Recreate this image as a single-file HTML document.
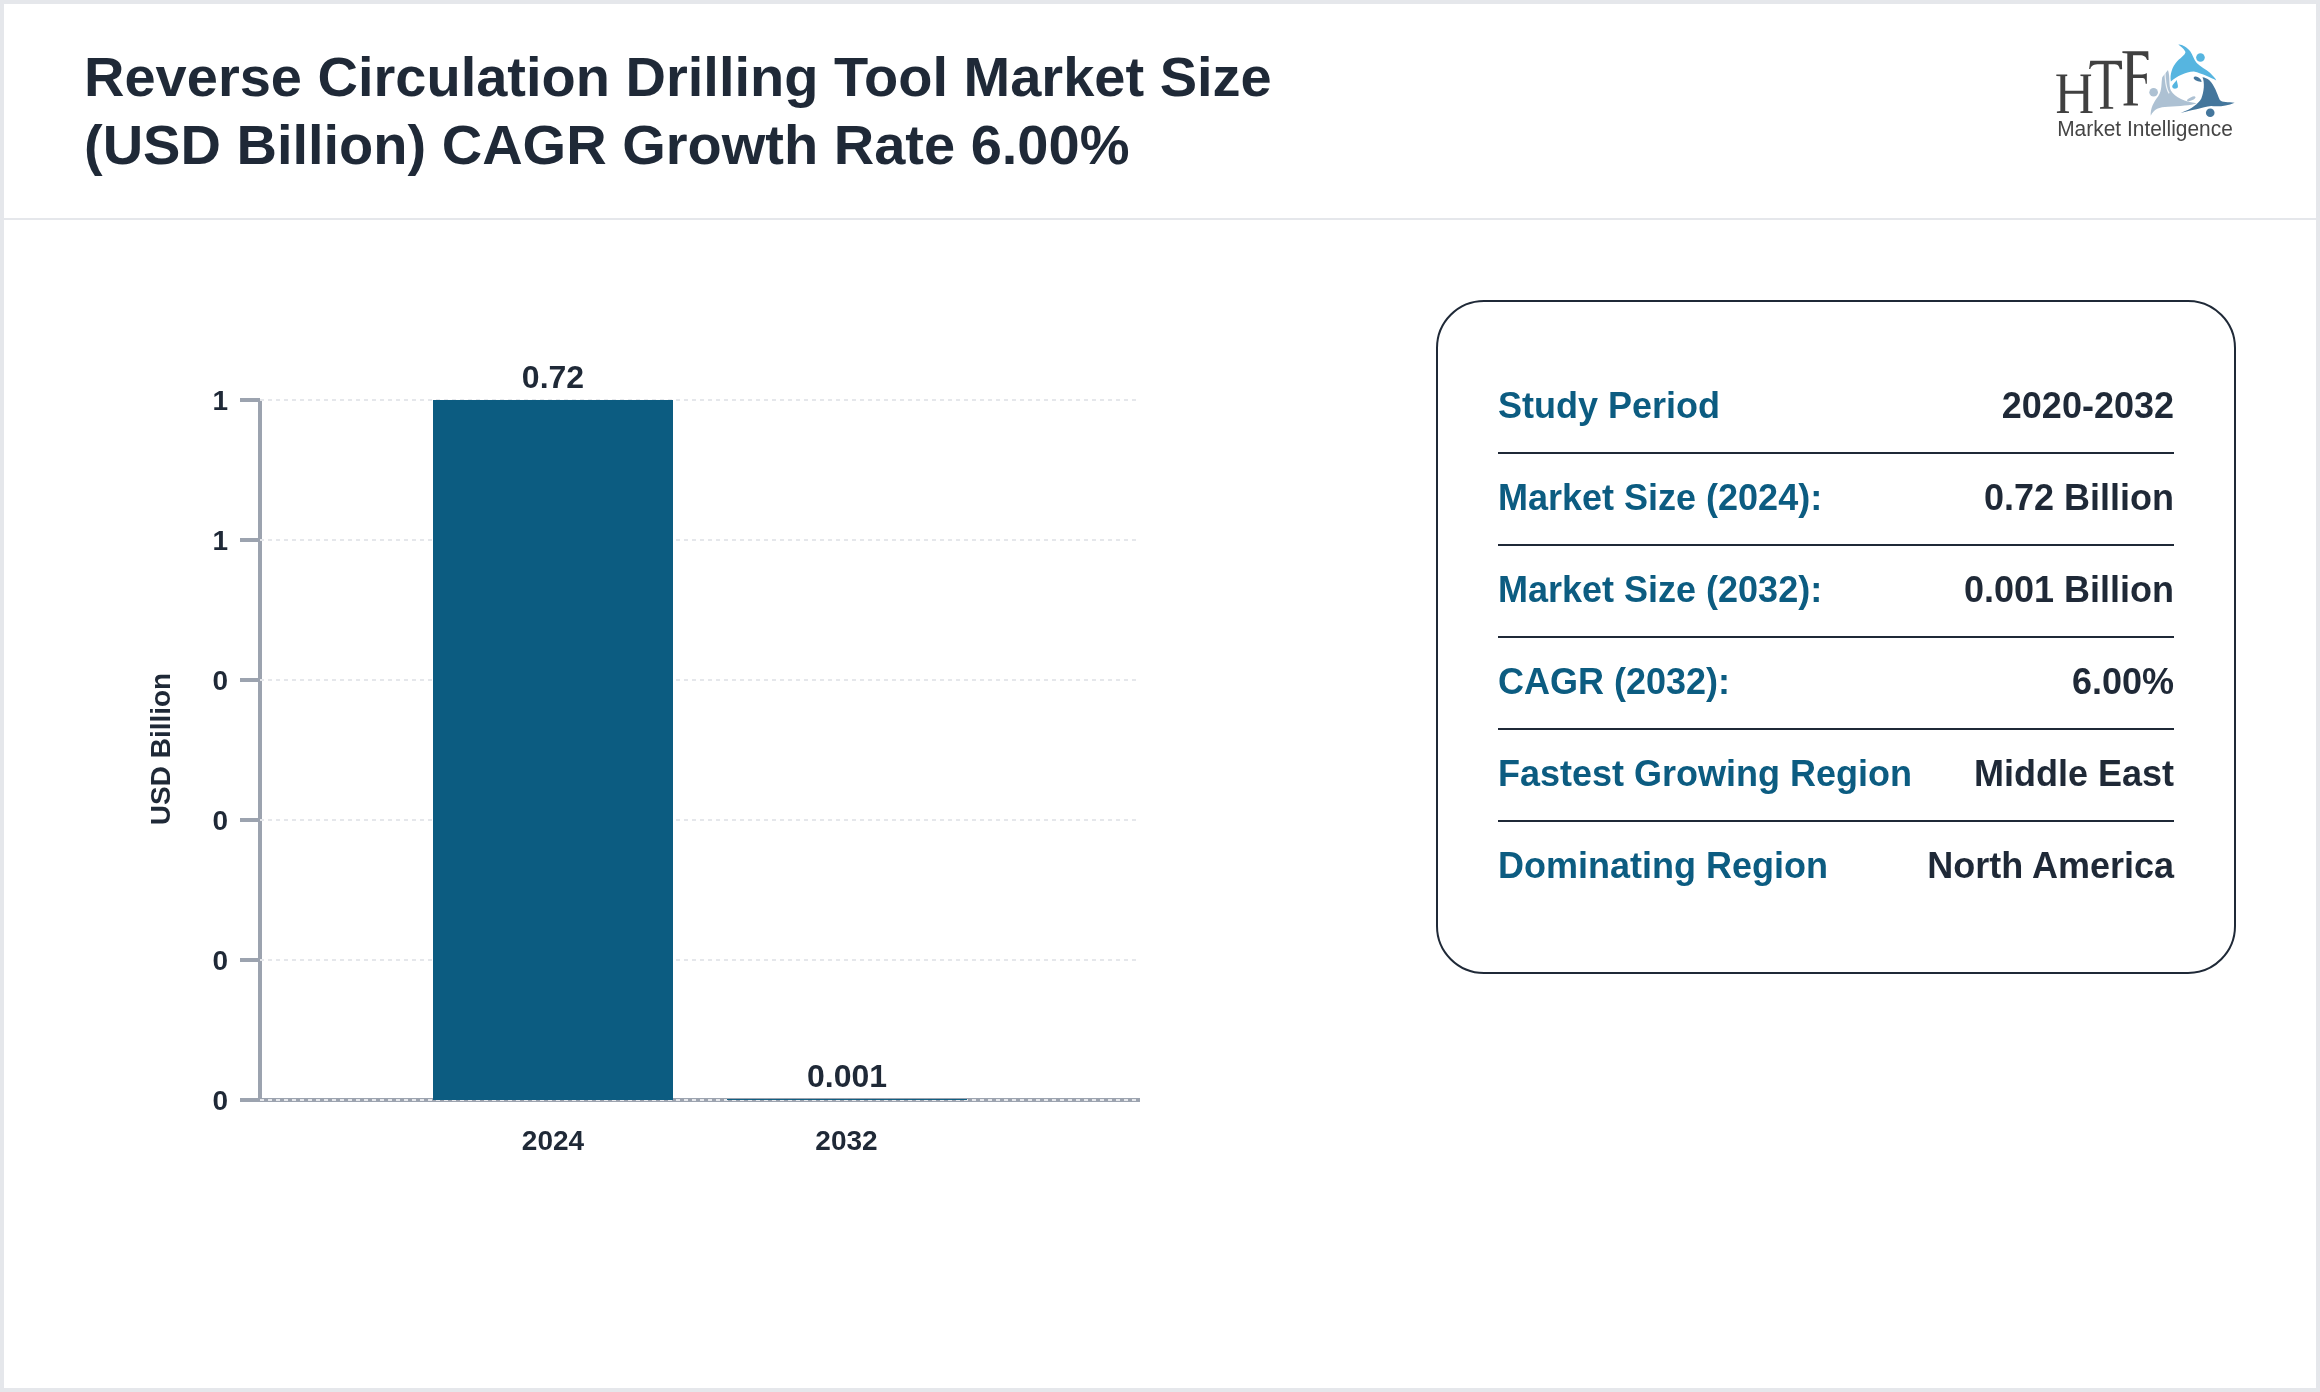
<!DOCTYPE html>
<html>
<head>
<meta charset="utf-8">
<style>
html,body{margin:0;padding:0;}
body{width:2320px;height:1392px;overflow:hidden;background:#e5e7eb;font-family:"Liberation Sans",sans-serif;}
#frame{will-change:transform;position:absolute;left:4px;top:4px;width:2312px;height:1384px;background:#fff;}
#header{position:absolute;left:0;top:0;width:2312px;height:214px;border-bottom:2px solid #e5e7eb;}
#title{position:absolute;left:80px;top:39px;margin:0;font-weight:bold;font-size:56px;line-height:68px;color:#1f2937;white-space:nowrap;}
#swirl{position:absolute;left:2141px;top:36px;width:95px;height:80px;}
#htf{position:absolute;left:2046px;top:36px;width:110px;height:80px;}
#logo{position:absolute;left:2036px;top:32px;width:210px;height:114px;}
#chart{will-change:transform;position:absolute;left:0;top:0;width:2320px;height:1392px;}
#card{will-change:transform;position:absolute;left:1436px;top:300px;width:796px;height:670px;border:2px solid #1f2937;border-radius:48px;background:#fff;}
.row{position:absolute;left:60px;width:676px;height:92px;}
.row .k{position:absolute;left:0;top:0;font-weight:bold;font-size:36px;line-height:54px;color:#0c5c81;white-space:nowrap;}
.row .v{position:absolute;right:0;top:0;font-weight:bold;font-size:36px;line-height:54px;color:#1f2937;white-space:nowrap;}
.row .ln{position:absolute;left:0;top:90px;width:676px;height:2px;background:#1f2937;}
</style>
</head>
<body>
<div id="frame">
  <div id="header">
    <svg id="logo" width="210" height="114" viewBox="0 0 2320 1259">
  <text x="190" y="1110" font-family="Liberation Sans" font-size="235" fill="#454545" textLength="1940" lengthAdjust="spacingAndGlyphs">Market Intelligence</text>
</svg>
    <svg id="swirl" width="95" height="80" viewBox="0 0 1653 1392">
    <path fill="#56b5e0" d="M580 80 C640 70 730 130 790 200 C830 260 850 340 900 400 C960 460 1060 510 1130 570 C1180 620 1230 670 1240 705 C1150 660 1000 585 850 550 C700 560 560 630 450 720 C430 600 470 470 560 370 C640 290 720 240 700 200 C670 150 620 110 580 80 Z"/>
    <circle cx="965" cy="305" r="75" fill="#56b5e0"/>
    <path fill="#56b5e0" d="M551 694 C560 740 578 790 572 818 C566 855 478 862 474 815 C470 778 520 740 551 694 Z"/>
    <path fill="#44769c" d="M1000 650 C1040 740 1030 900 980 1020 C930 1110 820 1200 620 1270 C800 1230 1000 1175 1150 1150 C1300 1160 1420 1150 1560 1090 C1450 1075 1340 1095 1300 1040 C1250 920 1210 790 1120 700 C1080 670 1040 655 1000 650 Z"/>
    <path fill="#44769c" d="M846 662 C846 618 925 628 962 678 C982 703 990 725 980 732 C940 722 848 705 846 662 Z"/>
    <circle cx="1135" cy="1265" r="75" fill="#44769c"/>
    <path fill="#adc1d3" d="M400 520 C440 640 410 780 450 880 C520 1000 700 1080 900 1100 C800 1140 600 1150 400 1160 C250 1165 150 1200 100 1320 C90 1200 150 1080 230 980 C300 880 280 760 300 650 C330 600 370 560 400 520 Z"/>
    <ellipse cx="805" cy="1025" rx="80" ry="28" transform="rotate(-25 805 1025)" fill="#adc1d3"/>
    <circle cx="150" cy="910" r="75" fill="#adc1d3"/>
    <path d="M345 560 C360 700 350 820 420 930" stroke="#fff" stroke-width="22" fill="none" opacity="0.8"/>
</svg>
    <svg id="htf" width="110" height="80" viewBox="0 0 1914 1392">
    <g fill="#404040">
    <path d="M110 600 L300 600 L300 625 L265 632 L265 885 L580 885 L580 632 L530 625 L530 600 L715 600 L715 625 L665 632 L665 1235 L740 1245 L740 1270 L530 1270 L530 1245 L580 1235 L580 935 L265 935 L265 1235 L330 1245 L330 1270 L120 1270 L120 1245 L180 1235 L180 632 L110 625 Z"/>
    <path d="M700 360 L1250 360 L1255 510 L1215 510 C1200 440 1180 420 1100 420 L1020 420 L1020 1160 L1100 1170 L1100 1195 L870 1195 L870 1170 L935 1160 L935 420 L860 420 C760 420 720 440 700 505 L680 505 Z"/>
    <path d="M1260 195 L1710 195 L1715 350 L1690 350 C1670 290 1640 265 1560 265 L1445 265 L1445 600 L1600 600 C1650 600 1665 590 1670 580 L1685 580 L1685 760 L1665 760 C1660 680 1650 660 1600 660 L1445 660 L1445 1100 L1530 1110 L1530 1140 L1280 1140 L1280 1110 L1345 1100 L1345 235 L1260 225 Z"/>
    </g>
</svg>
    <h1 id="title">Reverse Circulation Drilling Tool Market Size<br>(USD Billion) CAGR Growth Rate 6.00%</h1>
  </div>
</div>

<svg id="chart" width="2320" height="1392" viewBox="0 0 2320 1392">
  <line x1="260" y1="400" x2="260" y2="1100" stroke="#9ca3af" stroke-width="4"/>
  <line x1="260" y1="1100" x2="1140" y2="1100" stroke="#9ca3af" stroke-width="4"/>
  <line x1="240" y1="400" x2="260" y2="400" stroke="#9ca3af" stroke-width="4"/>
  <line x1="240" y1="540" x2="260" y2="540" stroke="#9ca3af" stroke-width="4"/>
  <line x1="240" y1="680" x2="260" y2="680" stroke="#9ca3af" stroke-width="4"/>
  <line x1="240" y1="820" x2="260" y2="820" stroke="#9ca3af" stroke-width="4"/>
  <line x1="240" y1="960" x2="260" y2="960" stroke="#9ca3af" stroke-width="4"/>
  <line x1="240" y1="1100" x2="260" y2="1100" stroke="#9ca3af" stroke-width="4"/>
  <line x1="260" y1="400" x2="1140" y2="400" stroke="#e5e7eb" stroke-width="2" stroke-dasharray="4 4"/>
  <line x1="260" y1="540" x2="1140" y2="540" stroke="#e5e7eb" stroke-width="2" stroke-dasharray="4 4"/>
  <line x1="260" y1="680" x2="1140" y2="680" stroke="#e5e7eb" stroke-width="2" stroke-dasharray="4 4"/>
  <line x1="260" y1="820" x2="1140" y2="820" stroke="#e5e7eb" stroke-width="2" stroke-dasharray="4 4"/>
  <line x1="260" y1="960" x2="1140" y2="960" stroke="#e5e7eb" stroke-width="2" stroke-dasharray="4 4"/>
  <line x1="260" y1="1100" x2="1140" y2="1100" stroke="#e5e7eb" stroke-width="2" stroke-dasharray="4 4"/>
  <rect x="433" y="400" width="240" height="700" fill="#0c5c81"/>
  <rect x="727" y="1099.03" width="240" height="0.97" fill="#0c5c81"/>
  <g fill="#1f2937" font-family="Liberation Sans" font-weight="bold">
  <text x="228" y="400" dy="0.355em" font-size="28" text-anchor="end">1</text>
  <text x="228" y="540" dy="0.355em" font-size="28" text-anchor="end">1</text>
  <text x="228" y="680" dy="0.355em" font-size="28" text-anchor="end">0</text>
  <text x="228" y="820" dy="0.355em" font-size="28" text-anchor="end">0</text>
  <text x="228" y="960" dy="0.355em" font-size="28" text-anchor="end">0</text>
  <text x="228" y="1100" dy="0.355em" font-size="28" text-anchor="end">0</text>
  <text x="553" y="1150" font-size="28" text-anchor="middle">2024</text>
  <text x="846.5" y="1150" font-size="28" text-anchor="middle">2032</text>
  <text x="553" y="388" font-size="32" text-anchor="middle">0.72</text>
  <text x="847" y="1087" font-size="32" text-anchor="middle">0.001</text>
  <text transform="translate(170 749) rotate(-90)" font-size="28" text-anchor="middle">USD Billion</text>
  </g>
</svg>

<div id="card">
  <div class="row" style="top:60px"><div class="k" style="top:17px">Study Period</div><div class="v" style="top:17px">2020-2032</div><div class="ln"></div></div>
  <div class="row" style="top:152px"><div class="k" style="top:17px">Market Size (2024):</div><div class="v" style="top:17px">0.72 Billion</div><div class="ln"></div></div>
  <div class="row" style="top:244px"><div class="k" style="top:17px">Market Size (2032):</div><div class="v" style="top:17px">0.001 Billion</div><div class="ln"></div></div>
  <div class="row" style="top:336px"><div class="k" style="top:17px">CAGR (2032):</div><div class="v" style="top:17px">6.00%</div><div class="ln"></div></div>
  <div class="row" style="top:428px"><div class="k" style="top:17px">Fastest Growing Region</div><div class="v" style="top:17px">Middle East</div><div class="ln"></div></div>
  <div class="row" style="top:520px"><div class="k" style="top:17px">Dominating Region</div><div class="v" style="top:17px">North America</div></div>
</div>
</body>
</html>
